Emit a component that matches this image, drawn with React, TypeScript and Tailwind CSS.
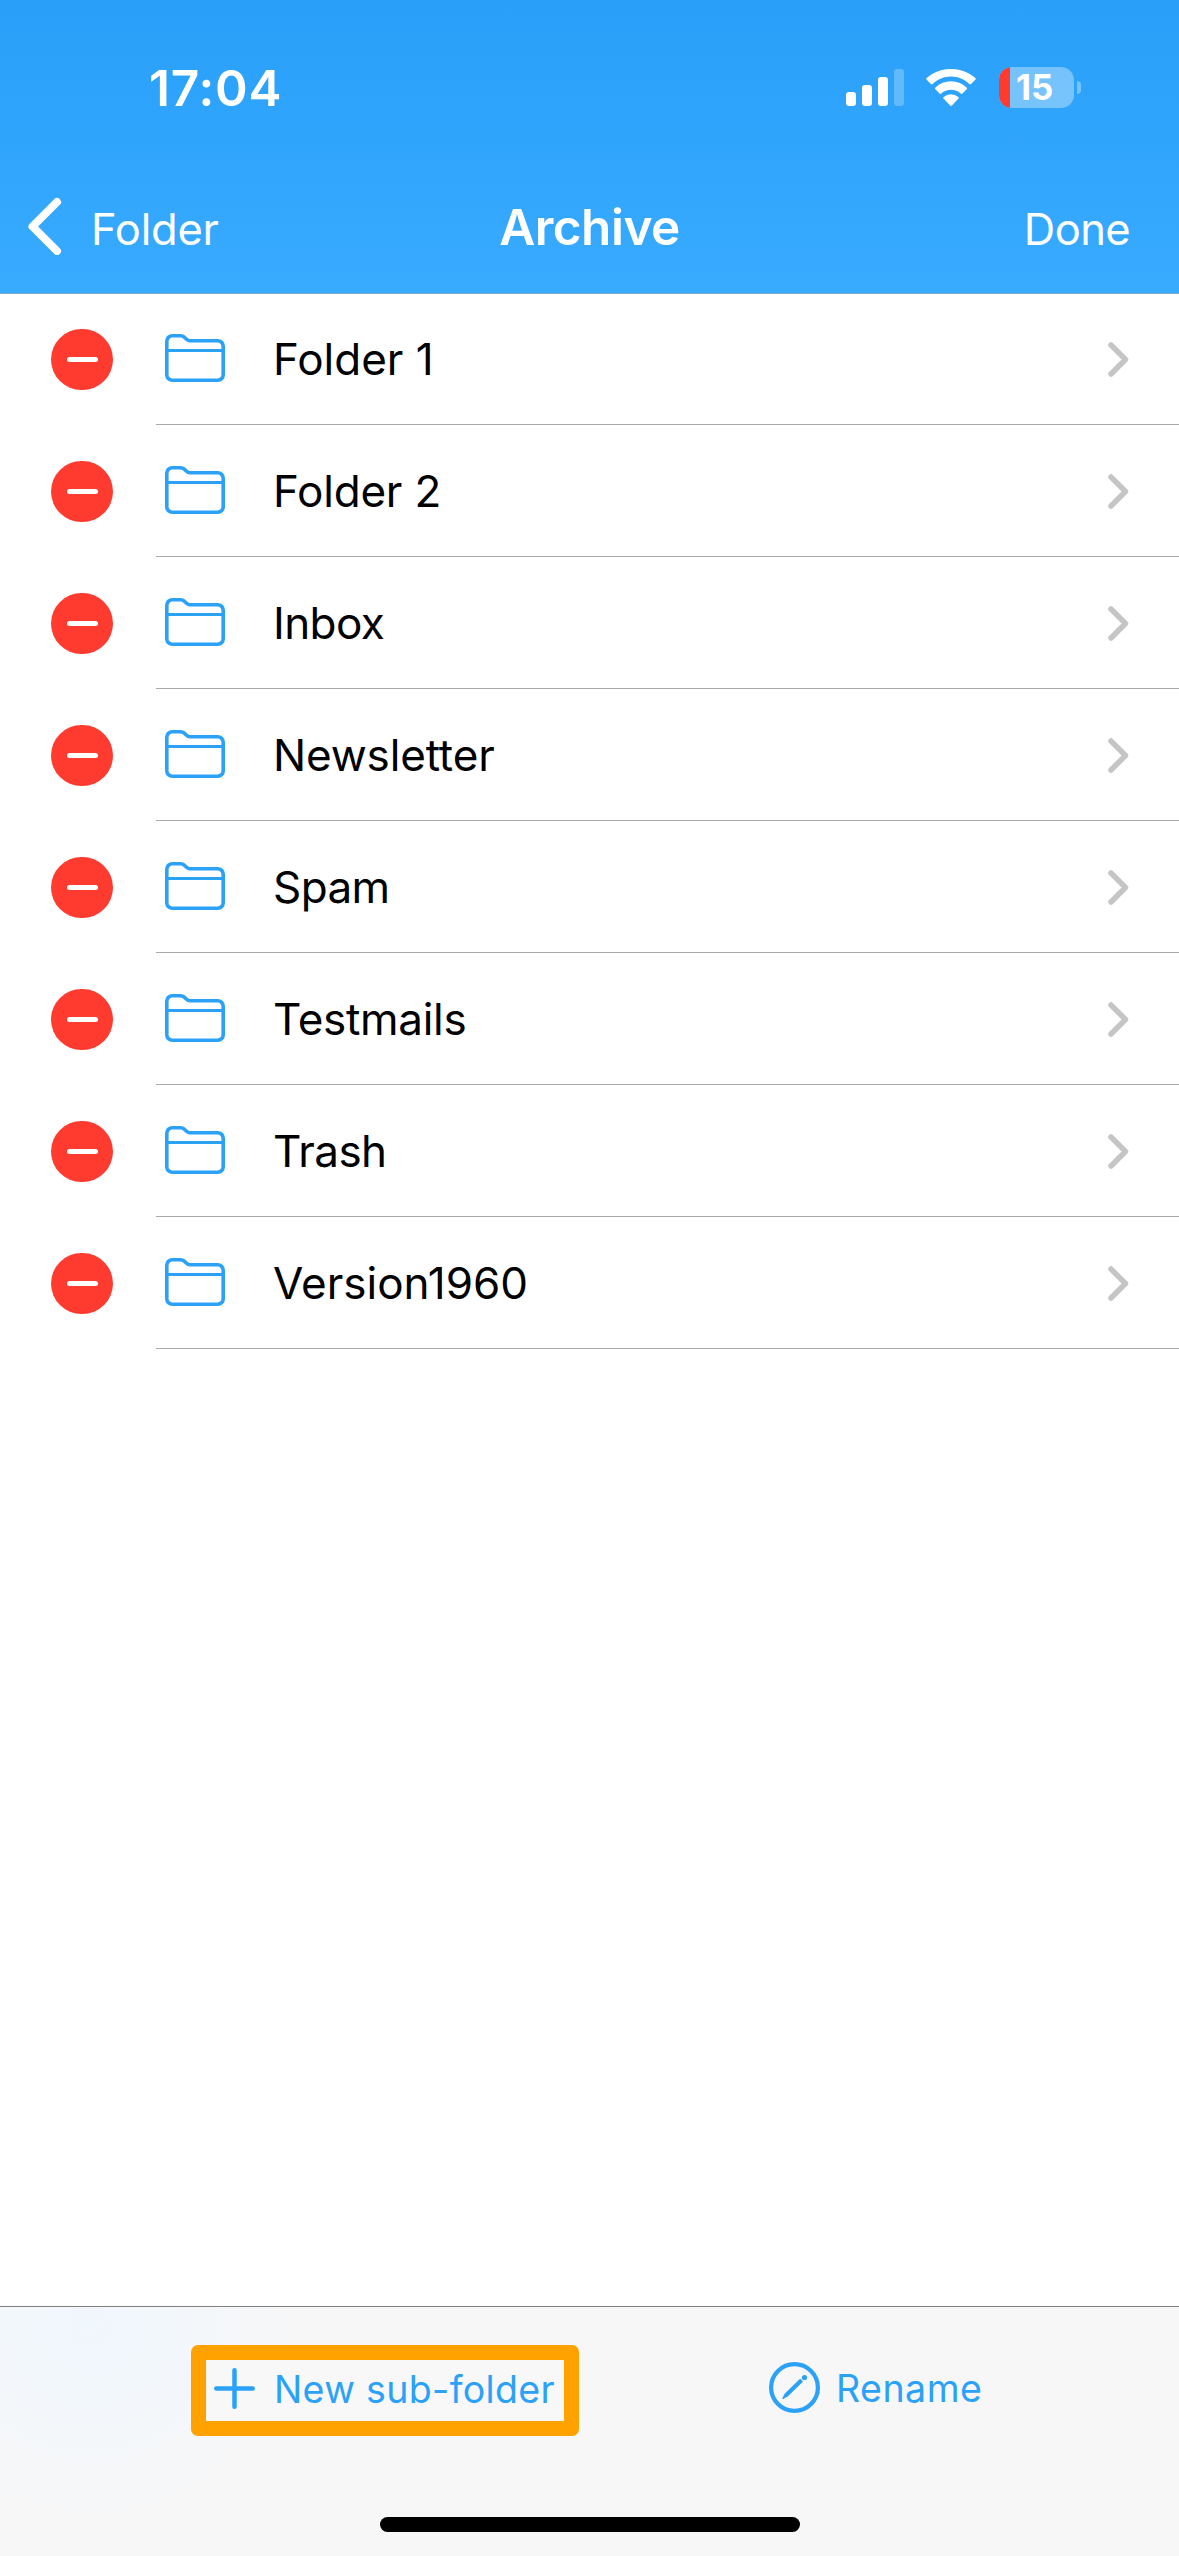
const folders = [
  { name: "Folder 1", tracking: "tracking-[0px]" },
  { name: "Folder 2", tracking: "tracking-[-0.2px]" },
  { name: "Inbox", tracking: "tracking-[-0.6px]" },
  { name: "Newsletter", tracking: "tracking-[-0.15px]" },
  { name: "Spam", tracking: "tracking-[-0.6px]" },
  { name: "Testmails", tracking: "tracking-[-0.3px]" },
  { name: "Trash", tracking: "tracking-[-0.6px]" },
  { name: "Version1960", tracking: "tracking-[0px]" },
];

const SignalIcon = () => (
  <svg width="58" height="37" viewBox="0 0 58 37" fill="white">
    <rect x="0" y="23" width="10" height="14" rx="3" />
    <rect x="16" y="16" width="10" height="21" rx="3" />
    <rect x="32" y="8" width="10" height="29" rx="3" />
    <rect x="48" y="0" width="10" height="37" rx="3" opacity="0.25" />
  </svg>
);

const WifiIcon = () => (
  <svg width="50" height="37" viewBox="0 0 50 37" fill="white">
    <path d="M25 7.6c6.9 0 13.4 2.7 18.3 7.5a1.3 1.3 0 0 0 1.8 0l4.2-4.3a1.3 1.3 0 0 0 0-1.9C35.8-3 14.2-3 .7 8.9a1.3 1.3 0 0 0 0 1.9l4.2 4.3a1.3 1.3 0 0 0 1.8 0C11.6 10.3 18.1 7.6 25 7.6z" />
    <path d="M25 20.8c3.6 0 7 1.3 9.7 3.7a1.3 1.3 0 0 0 1.8 0l4.1-4.2a1.3 1.3 0 0 0 0-1.9c-8.8-8.1-22.4-8.1-31.2 0a1.3 1.3 0 0 0 0 1.9l4.1 4.2a1.3 1.3 0 0 0 1.8 0c2.7-2.4 6.1-3.7 9.7-3.7z" />
    <path d="M32.3 29.8a1.2 1.2 0 0 0 0-1.8 11.3 11.3 0 0 0-14.6 0 1.2 1.2 0 0 0 0 1.8l6.4 6.7a1.25 1.25 0 0 0 1.8 0z" />
  </svg>
);

const FolderIcon = () => (
  <svg
    width="60"
    height="48"
    viewBox="0 0 60 48"
    fill="none"
    stroke="#2ba1f8"
    strokeWidth="3.6"
    className="-mt-[2px]"
  >
    <path d="M1.8 7.2a5.4 5.4 0 0 1 5.4-5.4h8.4c1.5 0 2.7.5 3.7 1.4l2.2 2.1c1 1 2.1 1.500 3.600 1.500h27.700a5.400 5.400 0 0 1 5.400 5.400v28.600a5.400 5.400 0 0 1-5.400 5.400H7.200a5.400 5.400 0 0 1-5.400-5.400z" />
    <path d="M2 16.500h56" strokeWidth="3.2" />
  </svg>
);

const PencilCircleIcon = () => (
  <svg width="51" height="51" viewBox="0 0 51 51" fill="#2ba1f8">
    <circle
      cx="25.5"
      cy="25.5"
      r="23.4"
      fill="none"
      stroke="#2ba1f8"
      strokeWidth="4.2"
    />
    <path d="M30.5 17.2q.8-.6 1.5.1l1.4 1.4q.7.8 0 1.5L18.7 34.5l-4.4 2.4q-1.4.5-.9-.9l2.4-4.4z" />
    <circle cx="35.5" cy="15.5" r="2.6" />
  </svg>
);

const StatusBar = () => (
  <div className="flex h-[176px] items-start justify-between pt-[66px] pr-[98px] pl-[149px]">
    <div className="text-[49.5px] leading-[44px] font-semibold tracking-[0.8px]">
      17:04
    </div>
    <div className="flex h-[42px] items-center">
      <SignalIcon />
      <div className="ml-[22px]">
        <WifiIcon />
      </div>
      <div className="ml-[23px] flex h-[41px] w-[75px] items-center overflow-hidden rounded-[13px] bg-white/35">
        <div className="h-full w-[11px] bg-[#ff3b30]" />
        <div className="pl-[6px] text-[35px] leading-[41px] font-bold">15</div>
      </div>
      <div className="ml-[3px] h-[13px] w-[4px] rounded-r-full bg-white/35" />
    </div>
  </div>
);

const NavBar = () => (
  <div className="grid h-[117px] grid-cols-3 items-start">
    <div className="flex pt-[21px] pl-[28px]">
      <svg width="34" height="58" viewBox="0 0 34 58" fill="none">
        <path
          d="M29 5L4.5 29.5 29 54"
          stroke="white"
          strokeWidth="8"
          strokeLinecap="round"
          strokeLinejoin="round"
        />
      </svg>
      <div className="pt-[5px] pl-[29px] text-[43.5px] leading-[54px] tracking-[-0.2px]">
        Folder
      </div>
    </div>
    <div className="pt-[24px] text-center text-[49.5px] leading-[54px] font-semibold tracking-[-0.5px]">
      Archive
    </div>
    <div className="pt-[26px] pr-[49px] text-right text-[43.5px] leading-[54px] tracking-[-0.6px]">
      Done
    </div>
  </div>
);

const FolderRow = ({ name, tracking }: { name: string; tracking: string }) => (
  <li className="flex h-[132px]">
    <div className="flex w-[156px] items-center pl-[51px]">
      <div className="flex h-[61px] w-[62px] items-center justify-center rounded-full bg-[#ff3b30]">
        <div className="h-[5px] w-[31px] rounded-full bg-white" />
      </div>
    </div>
    <div className="flex flex-1 items-center border-b border-[#aaaaac] pr-[50px] pl-[9px]">
      <FolderIcon />
      <div
        className={`flex-1 pl-[48px] text-[44px] leading-[54px] text-black ${tracking}`}
      >
        {name}
      </div>
      <svg
        width="21"
        height="35"
        viewBox="0 0 21 35"
        fill="none"
        className="mt-[1px]"
      >
        <path
          d="M3 3l14.5 14.5L3 32"
          stroke="#c5c5c7"
          strokeWidth="5.5"
          strokeLinecap="round"
          strokeLinejoin="round"
        />
      </svg>
    </div>
  </li>
);

export default function App() {
  return (
    <div className="flex h-[2556px] w-[1179px] flex-col overflow-hidden bg-white font-[Inter,sans-serif]">
      <header className="relative bg-linear-to-b from-[#299ff9] to-[#38abff] text-white shadow-[0_1px_0_#7fabd0]">
        <StatusBar />
        <NavBar />
      </header>

      <ul className="flex-1">
        {folders.map((folder) => (
          <FolderRow key={folder.name} {...folder} />
        ))}
      </ul>

      <footer className="flex h-[250px] flex-col border-t border-[#808080] bg-[#f7f7f8] bg-[radial-gradient(ellipse_200px_190px_at_90px_20px,#f0f7fd,#f7f7f8)] text-[#2ba1f8]">
        <div className="flex flex-1 items-start">
          <button className="mt-[38px] ml-[191px] flex h-[91px] w-[388px] items-center rounded-[7px] bg-[#ffa200] p-[15px]">
            <span className="flex h-[61px] w-full items-center bg-[#f8f8f9] pb-[4px] pl-[8px]">
              <svg width="41" height="41" viewBox="0 0 41 41" className="shrink-0">
                <path
                  d="M20.5 2.3v36.4M2.3 20.5h36.4"
                  stroke="#2ba1f8"
                  strokeWidth="4.5"
                  strokeLinecap="round"
                />
              </svg>
              <span className="pt-[2px] pl-[19px] text-[37.5px] leading-[46px] tracking-[0.35px] whitespace-nowrap">
                New sub-folder
              </span>
            </span>
          </button>
          <button className="mt-[55px] ml-[190px] flex items-center">
            <PencilCircleIcon />
            <span className="pt-[2px] pl-[16px] text-[37.5px] leading-[46px] tracking-[0.5px]">
              Rename
            </span>
          </button>
        </div>
        <div className="mb-[24px] ml-[380px] h-[15px] w-[420px] rounded-full bg-black" />
      </footer>
    </div>
  );
}
